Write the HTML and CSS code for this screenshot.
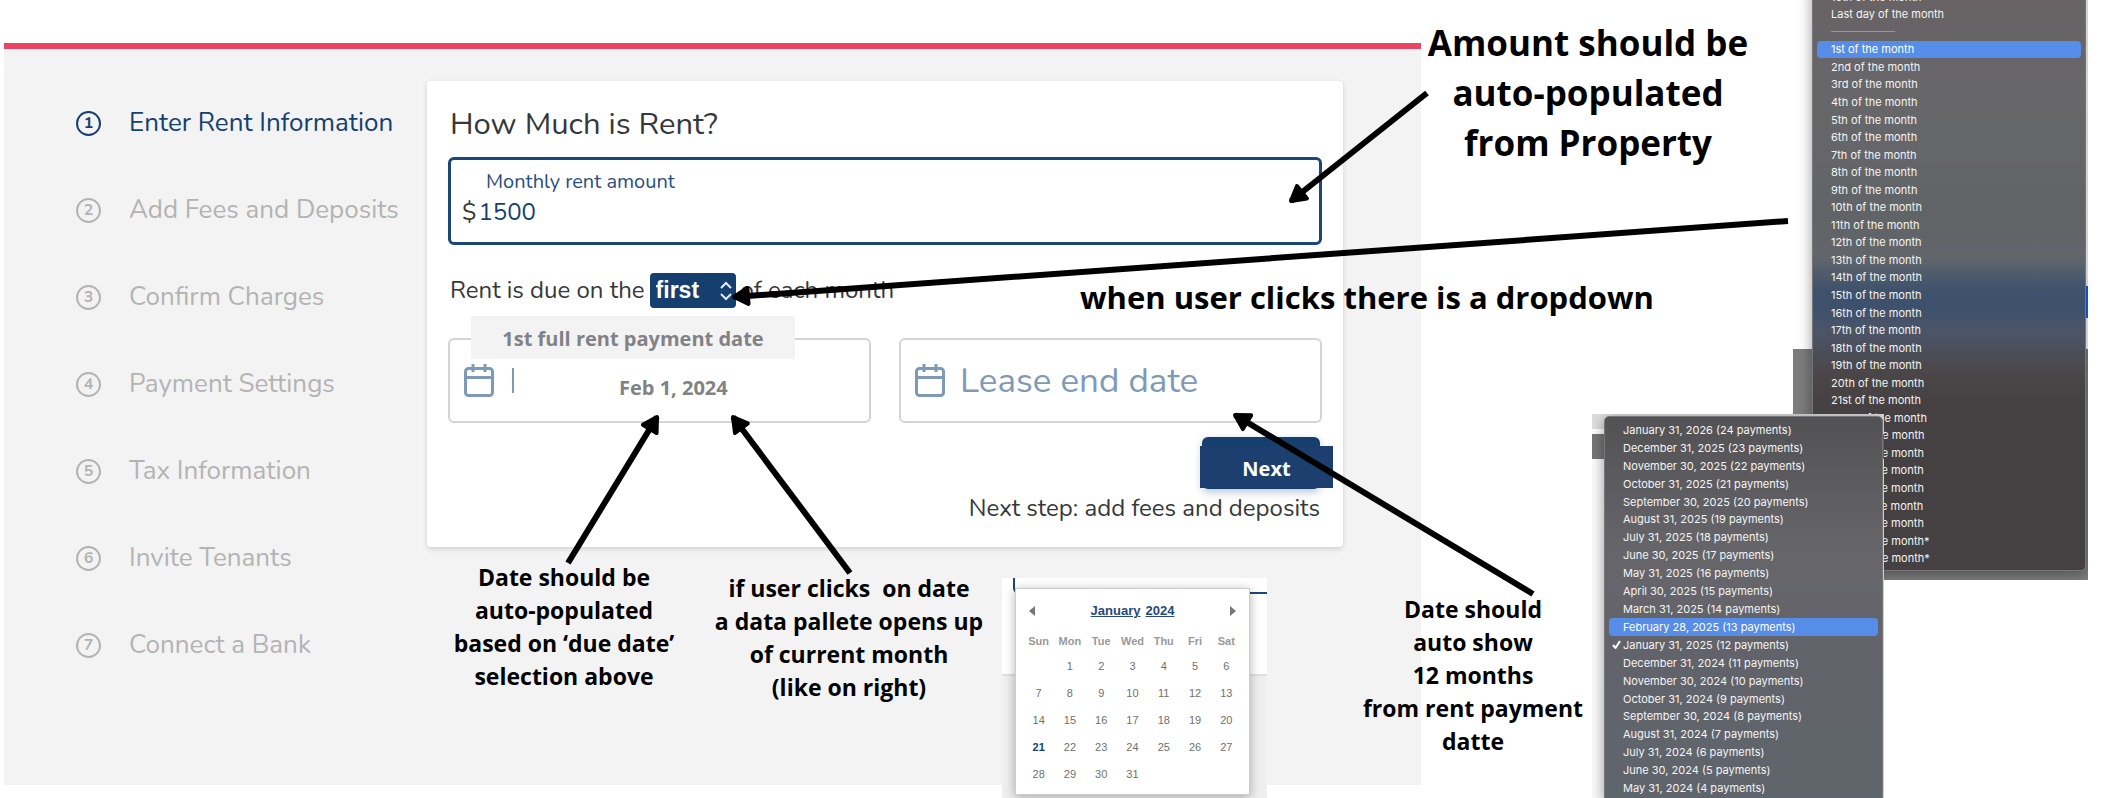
FILE: index.html
```html
<!DOCTYPE html>
<html lang="en">
<head>
<meta charset="utf-8">
<title>Rent setup</title>
<link rel="stylesheet" href="styles.css">
</head>
<body>
<div class="board">
  <main class="panel">
    <nav class="steps" aria-label="Setup steps">
      <a class="step step-active" href="#"><span class="num">1</span>Enter Rent Information</a>
      <a class="step" href="#"><span class="num">2</span>Add Fees and Deposits</a>
      <a class="step" href="#"><span class="num">3</span>Confirm Charges</a>
      <a class="step" href="#"><span class="num">4</span>Payment Settings</a>
      <a class="step" href="#"><span class="num">5</span>Tax Information</a>
      <a class="step" href="#"><span class="num">6</span>Invite Tenants</a>
      <a class="step" href="#"><span class="num">7</span>Connect a Bank</a>
    </nav>
    <form class="card">
      <h1 class="title">How Much is Rent?</h1>
      <div class="amount">
        <label class="amount-label" for="amount">Monthly rent amount</label>
        <div class="amount-row"><span>$</span><input id="amount" class="amount-input" type="text" value="1500"></div>
      </div>
      <div class="due">
        <label for="due">Rent is due on the</label>
        <span class="picker">
          <select id="due" class="picker-select"><option>first</option></select>
          <svg class="picker-icon" width="14" height="20" viewBox="0 0 14 20"><path d="M2 7l5-5 5 5M2 13l5 5 5-5"/></svg>
        </span>
        <span>of each month</span>
      </div>
      <div class="dates">
        <div class="date">
          <svg class="cal-icon" width="30" height="33" viewBox="0 0 30 33"><rect x="1.5" y="4.5" width="27" height="27" rx="3"/><path d="M1.5 13.500h27M9 0v8M21 0v8"/></svg>
          <span class="caret"></span>
          <label class="date-label" for="start">1st full rent payment date</label>
          <input id="start" class="date-input date-value" type="text" value="Feb 1, 2024">
        </div>
        <div class="date">
          <svg class="cal-icon" width="30" height="33" viewBox="0 0 30 33"><rect x="1.5" y="4.5" width="27" height="27" rx="3"/><path d="M1.5 13.500h27M9 0v8M21 0v8"/></svg>
          <input class="date-input" type="text" placeholder="Lease end date" aria-label="Lease end date">
        </div>
      </div>
      <button class="next" type="button"><span class="next-text">Next</span></button>
      <p class="hint">Next step: add fees and deposits</p>
    </form>
  </main>

  <section class="popover">
    <div class="popover-page"></div>
    <div class="calendar">
      <div class="cal-head">
        <button class="cal-nav" type="button" aria-label="Previous month"><svg width="6" height="10" viewBox="0 0 6 10"><path d="M6 0v10L0 5z"/></svg></button>
        <div class="cal-title"><a href="#">January</a><a href="#">2024</a></div>
        <button class="cal-nav" type="button" aria-label="Next month"><svg width="6" height="10" viewBox="0 0 6 10"><path d="M0 0v10l6-5z"/></svg></button>
      </div>
      <table class="days">
        <thead><tr><th>Sun</th><th>Mon</th><th>Tue</th><th>Wed</th><th>Thu</th><th>Fri</th><th>Sat</th></tr></thead>
        <tbody>
          <tr><td></td><td>1</td><td>2</td><td>3</td><td>4</td><td>5</td><td>6</td></tr>
          <tr><td>7</td><td>8</td><td>9</td><td>10</td><td>11</td><td>12</td><td>13</td></tr>
          <tr><td>14</td><td>15</td><td>16</td><td>17</td><td>18</td><td>19</td><td>20</td></tr>
          <tr><td class="today">21</td><td>22</td><td>23</td><td>24</td><td>25</td><td>26</td><td>27</td></tr>
          <tr><td>28</td><td>29</td><td>30</td><td>31</td><td></td><td></td><td></td></tr>
        </tbody>
      </table>
    </div>
  </section>

  <section class="shot shot-month">
    <ul class="menu menu-month" role="listbox" aria-label="Due date">
      <li role="option">15th of the month</li>
      <li role="option">Last day of the month</li>
      <li class="rule" role="separator"></li>
      <li class="picked" role="option" aria-selected="true">1st of the month</li>
      <li role="option">2nd of the month</li>
      <li role="option">3rd of the month</li>
      <li role="option">4th of the month</li>
      <li role="option">5th of the month</li>
      <li role="option">6th of the month</li>
      <li role="option">7th of the month</li>
      <li role="option">8th of the month</li>
      <li role="option">9th of the month</li>
      <li role="option">10th of the month</li>
      <li role="option">11th of the month</li>
      <li role="option">12th of the month</li>
      <li role="option">13th of the month</li>
      <li role="option">14th of the month</li>
      <li role="option">15th of the month</li>
      <li role="option">16th of the month</li>
      <li role="option">17th of the month</li>
      <li role="option">18th of the month</li>
      <li role="option">19th of the month</li>
      <li role="option">20th of the month</li>
      <li role="option">21st of the month</li>
      <li role="option">22nd of the month</li>
      <li role="option">23rd of the month</li>
      <li role="option">24th of the month</li>
      <li role="option">25th of the month</li>
      <li role="option">26th of the month</li>
      <li role="option">27th of the month</li>
      <li role="option">28th of the month</li>
      <li role="option">29th of the month*</li>
      <li role="option">30th of the month*</li>
    </ul>
  </section>

  <section class="shot shot-end">
    <ul class="menu menu-end" role="listbox" aria-label="Lease end">
      <li role="option">January 31, 2026 (24 payments)</li>
      <li role="option">December 31, 2025 (23 payments)</li>
      <li role="option">November 30, 2025 (22 payments)</li>
      <li role="option">October 31, 2025 (21 payments)</li>
      <li role="option">September 30, 2025 (20 payments)</li>
      <li role="option">August 31, 2025 (19 payments)</li>
      <li role="option">July 31, 2025 (18 payments)</li>
      <li role="option">June 30, 2025 (17 payments)</li>
      <li role="option">May 31, 2025 (16 payments)</li>
      <li role="option">April 30, 2025 (15 payments)</li>
      <li role="option">March 31, 2025 (14 payments)</li>
      <li class="picked" role="option">February 28, 2025 (13 payments)</li>
      <li class="checked" role="option" aria-selected="true"><svg class="check" width="9" height="9" viewBox="0 0 9 9"><path d="M1 5l2.500 3L8 1"/></svg>January 31, 2025 (12 payments)</li>
      <li role="option">December 31, 2024 (11 payments)</li>
      <li role="option">November 30, 2024 (10 payments)</li>
      <li role="option">October 31, 2024 (9 payments)</li>
      <li role="option">September 30, 2024 (8 payments)</li>
      <li role="option">August 31, 2024 (7 payments)</li>
      <li role="option">July 31, 2024 (6 payments)</li>
      <li role="option">June 30, 2024 (5 payments)</li>
      <li role="option">May 31, 2024 (4 payments)</li>
    </ul>
  </section>

  <p class="note note-large note-amount">Amount should be<br>auto-populated<br>from Property</p>
  <p class="note note-medium note-dropdown">when user clicks there is a dropdown</p>
  <p class="note note-start">Date should be<br>auto-populated<br>based on ‘due date’<br>selection above</p>
  <p class="note note-palette">if user clicks&nbsp; on date<br>a data pallete opens up<br>of current month<br>(like on right)</p>
  <p class="note note-end">Date should<br>auto show<br>12 months<br>from rent payment<br>datte</p>

  <svg class="arrows" width="2124" height="798" viewBox="0 0 2124 798" aria-hidden="true">
    <defs><marker id="head" markerUnits="userSpaceOnUse" markerWidth="26" markerHeight="26" refX="18" refY="12" orient="auto"><path d="M4 4L18 12L4 20z" fill="#000" stroke="#000" stroke-width="4" stroke-linejoin="round"/></marker></defs>
    <path d="M1427 93L1291 201" marker-end="url(#head)"/>
    <path d="M1788 221L734 297" marker-end="url(#head)"/>
    <path d="M568 563L657 417" marker-end="url(#head)"/>
    <path d="M850 573L733 417" marker-end="url(#head)"/>
    <path d="M1533 594L1235 415" marker-end="url(#head)"/>
  </svg>
</div>
</body>
</html>
```
FILE: styles.css
```css
* { box-sizing: border-box; }
body { margin: 0; background: #fff; font-family: Nunito, Lato, sans-serif; color: #36383a; }
.board { position: relative; min-height: 100vh; overflow: hidden; padding: 43px 703px 13px 4px; }
.panel { display: flex; align-items: flex-start; min-height: 742px; border-top: 6px solid #ea4463; background: #f3f3f3; padding: 32px 78px 32px 72px; }

.steps { flex: 0 0 351px; display: flex; flex-direction: column; gap: 57px; padding-top: 27px; }
.step { display: flex; align-items: center; gap: 28px; height: 30px; font-size: 26px; line-height: 30px; color: #b3b3b3; text-decoration: none; white-space: nowrap; }
.step-active { color: #173f70; }
.num { display: flex; align-items: center; justify-content: center; width: 25px; height: 25px; border: 2px solid currentColor; border-radius: 50%; font-size: 16px; line-height: 20px; font-weight: 700; }

.card { flex: 1; min-width: 0; display: flex; flex-direction: column; background: #fff; border-radius: 4px; box-shadow: 0 2px 5px rgba(0, 0, 0, .14); padding: 23px 21px 24px; }
.title { margin: 0 0 13px 2px; font-size: 31px; line-height: 40px; font-weight: 400; }
.amount { height: 88px; border: 3px solid #1c4578; border-radius: 6px; padding: 8px 11px; }
.amount-label { display: block; padding-left: 24px; font-size: 20px; line-height: 28px; color: #27507f; }
.amount-row { display: flex; gap: 2px; font-size: 24px; line-height: 32px; }
.amount-input { flex: 1; min-width: 0; border: 0; padding: 0; outline: 0; background: transparent; font: inherit; color: #173f70; }
.due { display: flex; align-items: center; gap: 5px; margin: 28px 0 0 2px; font-size: 24px; line-height: 35px; }
.picker { position: relative; display: flex; }
.picker-select { appearance: none; width: 86px; height: 35px; border: 0; border-radius: 4px; padding: 0 6px; background: #143f6e; color: #fff; font: 700 23px/35px "Liberation Sans", sans-serif; }
.picker-icon { position: absolute; right: 3px; top: 8px; fill: none; stroke: #e4ebf2; stroke-width: 2; pointer-events: none; }
.dates { display: grid; grid-template-columns: repeat(2, minmax(0, 1fr)); gap: 28px; margin-top: 30px; }
.date { position: relative; display: flex; align-items: center; height: 85px; border: 2px solid #d4d4d4; border-radius: 6px; padding: 0 14px; }
.cal-icon { flex: none; fill: none; stroke: #7e9ab6; stroke-width: 3; }
.caret { width: 2px; height: 25px; margin-left: 18px; background: #7e9ab6; }
.date-label { position: absolute; left: 21px; top: -24px; width: 324px; height: 43px; background: #f3f3f3; color: #808285; font: 700 20px/45px "Open Sans", sans-serif; text-align: center; }
.date-input { flex: 1; min-width: 0; border: 0; padding: 0 0 0 15px; outline: 0; background: transparent; font: 400 35px/48px Nunito, Lato, sans-serif; color: #7e9ab6; }
.date-input::placeholder { color: #7e9ab6; opacity: 1; }
.date-value { padding: 14px 0 0 105px; font: 700 20px/28px "Open Sans", sans-serif; color: #808285; }
.next { position: relative; align-self: flex-end; width: 118px; height: 52px; margin: 14px 2px 0 0; border: 0; border-radius: 6px; background: #143f6e; box-shadow: 0 3px 8px rgba(20, 63, 110, .3); }
.next-text { position: absolute; left: -2px; top: 9px; width: 133px; height: 42px; background: #1d3f70; color: #fff; font: 700 20px/45px "Open Sans", sans-serif; text-align: center; }
.hint { margin: 4px 2px 0; font-size: 24px; line-height: 30px; text-align: right; }

.popover { position: absolute; left: 1002px; top: 578px; width: 265px; height: 220px; padding: 10px 17px 0 13px; overflow: hidden; background: #efefef; }
.popover-page { position: absolute; left: 0; right: 0; top: 0; height: 98px; background: #fff; border-bottom: 2px solid #e0e0e0; }
.popover-page::before { content: ""; position: absolute; left: 11px; right: -8px; top: -40px; height: 52px; border: 2px solid #1c4578; border-radius: 6px; }
.calendar { position: relative; background: #fff; border: 1px solid #ccc; box-shadow: 0 2px 10px rgba(0, 0, 0, .3); padding: 14px 7px 7px; font-family: "Liberation Sans", sans-serif; }
.cal-head { display: flex; justify-content: space-between; align-items: center; padding: 0 6px; height: 16px; }
.cal-nav { display: flex; border: 0; padding: 0; background: none; fill: #777; }
.cal-title { display: flex; gap: 5px; font-size: 13px; line-height: 16px; font-weight: 700; }
.cal-title a { color: #24497c; }
.days { width: 100%; margin-top: 10px; border-collapse: collapse; table-layout: fixed; text-align: center; font-size: 11px; color: #707070; }
.days th { height: 23px; padding: 0; font-size: 11px; color: #999; }
.days td { height: 27px; padding: 0; }
.days .today { color: #173f70; font-weight: 700; }

.shot { position: absolute; overflow: hidden; }
.shot-month { left: 1793px; top: 0; width: 295px; height: 580px; padding: 0 2px 0 19px; background: linear-gradient(#1264e8, #1264e8) right 286px / 3px 32px no-repeat, linear-gradient(#fff 349px, #7c7c7c 349px); }
.shot-end { left: 1592px; top: 414px; width: 292px; height: 384px; padding: 2px 1px 0 12px; background: linear-gradient(#dedede 15px, #fff 15px, #fff 20px, #767676 20px, #767676 45px, #fafafa 45px); }
.menu { display: grid; grid-auto-rows: 1fr; margin: 0; padding: 0 4px; list-style: none; font: 400 11px/16px Inter, sans-serif; color: #f4f4f4; border: 1px solid #77777a; box-shadow: 0 2px 14px rgba(0, 0, 0, .4); }
.menu li { display: flex; align-items: center; padding: 0 14px; white-space: nowrap; }
.menu-month { height: 584px; margin-top: -13px; padding-bottom: 3px; border-radius: 0 0 5px 5px; background: linear-gradient(#686264, #67676a 20%, #606467 40%, #62666a 46%, #3e526c 52%, #3e516c 55%, #4b5568 59%, #4b4749 66%, #454041 72%); }
.menu-end { height: 384px; padding-top: 4px; padding-bottom: 2px; border-radius: 5px 5px 0 0; background: linear-gradient(#525255, #66666a 35%, #62636a 65%, #5f656c); }
.menu .picked { border-radius: 4px; background: #568de8; color: #fff; }
.menu .checked { position: relative; }
.check { position: absolute; left: 3px; fill: none; stroke: #fff; stroke-width: 2; }
.rule::before { content: ""; width: 64px; border-top: 1px solid #9a9798; }

.note { position: absolute; margin: 0; color: #000; font: 700 23px/33px "Open Sans", sans-serif; text-align: center; white-space: nowrap; transform: translateX(-50%); }
.note-large { font-size: 35px; line-height: 50px; }
.note-medium { font-size: 31px; line-height: 40px; }
.note-amount { left: 1588px; top: 18px; }
.note-dropdown { left: 1367px; top: 277px; }
.note-start { left: 564px; top: 561px; }
.note-palette { left: 849px; top: 572px; }
.note-end { left: 1473px; top: 593px; }
.arrows { position: absolute; left: 0; top: 0; fill: none; stroke: #000; stroke-width: 6; pointer-events: none; }
```
